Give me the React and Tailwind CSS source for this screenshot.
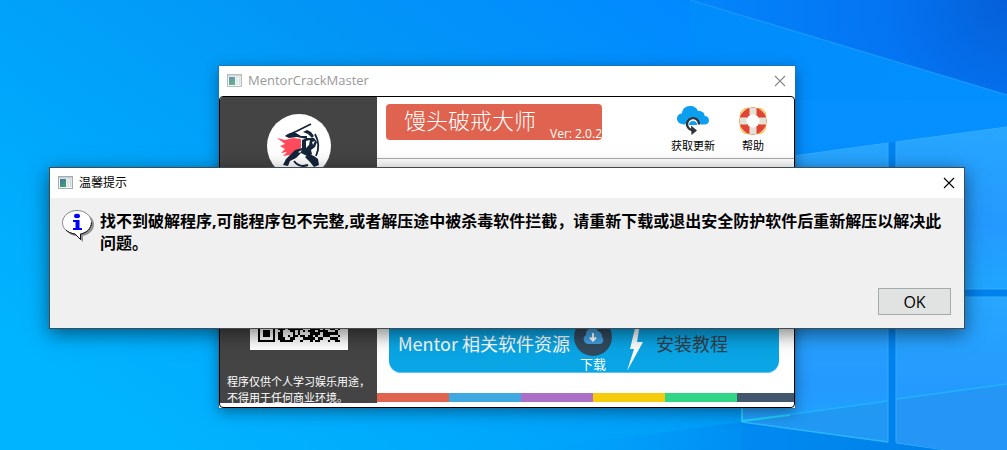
import React from "react";

function Wallpaper() {
  return (
    <svg
      className="absolute inset-0 h-full w-full"
      viewBox="0 0 1007 450"
      preserveAspectRatio="xMidYMid slice"
      aria-hidden="true"
    >
      <defs>
        <linearGradient id="sky" x1="0" y1="0.75" x2="1" y2="0.1">
          <stop offset="0" stopColor="#00b4ff" />
          <stop offset="0.3" stopColor="#00a4fa" />
          <stop offset="0.55" stopColor="#0295f6" />
          <stop offset="0.8" stopColor="#018aff" />
          <stop offset="1" stopColor="#0078f0" />
        </linearGradient>
        <radialGradient id="corner" gradientUnits="userSpaceOnUse" cx="1007" cy="0" r="300">
          <stop offset="0" stopColor="#0560d8" />
          <stop offset="0.4" stopColor="#0474f2" />
          <stop offset="1" stopColor="#0484fb" />
        </radialGradient>
        <linearGradient id="beam" x1="0" y1="0" x2="1" y2="0.6">
          <stop offset="0" stopColor="#018cfc" />
          <stop offset="1" stopColor="#0590ff" />
        </linearGradient>
        <linearGradient id="pane" x1="0" y1="0" x2="0" y2="1">
          <stop offset="0" stopColor="#27a6ff" />
          <stop offset="0.6" stopColor="#2499fe" />
          <stop offset="1" stopColor="#1fa6ff" />
        </linearGradient>
        <linearGradient id="floor" x1="0" y1="0" x2="1" y2="0">
          <stop offset="0" stopColor="#009dff" stopOpacity="0" />
          <stop offset="0.6" stopColor="#0089f0" />
          <stop offset="1" stopColor="#0080e8" />
        </linearGradient>
      </defs>
      <rect width="1007" height="450" fill="url(#sky)" />
      <path d="M690 0H1007V95Z" fill="url(#corner)" />
      <path d="M690 0L1007 95V300H700Z" fill="url(#beam)" />
      <path d="M690 0L1007 95" stroke="#1796ff" strokeWidth="1.5" />
      <path d="M742 130H1007V450H742Z" fill="#0082ee" />
      <path d="M742 100H1007V127L742 163Z" fill="#058fff" />
      <path d="M742 163L888 143V289H742Z" fill="url(#pane)" />
      <path d="M896 142L1007 127V289H896Z" fill="url(#pane)" />
      <path d="M742 297H888V442L742 422Z" fill="url(#pane)" />
      <path d="M896 297H1007V460L896 443Z" fill="url(#pane)" />
      <path d="M742 421L888 401V442L742 422Z" fill="#2098f4" />
      <path d="M896 399L1007 384V460L896 443Z" fill="#2596f5" />
      <path d="M742 421L888 401M896 399L1007 384" stroke="#20b4ff" strokeWidth="1.5" />
      <path
        d="M742 163L888 143V289M896 289V142L1007 127M896 289H1007M896 297H1007M888 297V442L742 422M896 297V443L1007 460"
        fill="none"
        stroke="#34acff"
        strokeWidth="1"
      />
      <path d="M530 450L742 422L942 450Z" fill="url(#floor)" />
      <path d="M742 422L888 442" stroke="#2cb4ff" strokeWidth="1.5" />
      <path d="M742 400V421L790 415" fill="none" stroke="#21d0ff" strokeWidth="2" />
    </svg>
  );
}

function AppIcon({ faded }) {
  return (
    <svg className={faded ? "h-4 w-4 opacity-80" : "h-4 w-4"} viewBox="0 0 16 16" aria-hidden="true">
      <defs>
        <linearGradient id="thumb" x1="0" y1="0" x2="0.6" y2="1">
          <stop offset="0" stopColor="#4472a8" />
          <stop offset="1" stopColor="#3fa06c" />
        </linearGradient>
      </defs>
      <rect x="0.5" y="1.5" width="14" height="12" fill="#f4f6f7" stroke="#a6acb0" />
      <rect x="1" y="2" width="13" height="1.500" fill="#c7ccd2" />
      <rect x="2" y="4" width="6" height="8" fill="url(#thumb)" />
      <rect x="8.500" y="4" width="3" height="8" fill="#dfe6ea" />
      <rect x="12" y="4" width="1.500" height="8" fill="#cfdcd6" />
    </svg>
  );
}

function CloseIcon() {
  return (
    <svg className="h-3 w-3" viewBox="0 0 12 12" fill="none" stroke="currentColor" aria-hidden="true">
      <path d="M1 1L11 11M11 1L1 11" strokeWidth="1.1" />
    </svg>
  );
}

function Warrior() {
  return (
    <svg className="h-16 w-16" viewBox="0 0 64 64" aria-hidden="true">
      <circle cx="32" cy="32" r="32" fill="#fff" />
      <path d="M19 22L30 17L44 10" fill="none" stroke="#14243a" strokeWidth="1.800" />
      <path d="M18 22L23 19L29 19L34 22L40 22V25L30 23L22 24ZM36 18L40 16L44 18L47 22L45 24L41 20Z" fill="#14243a" />
      <path d="M10 24L18 26L26 24L34 25V34L27 38L23 41L16 42L20 38L14 39L18 35L13 32L18 30Z" fill="#ff4b5c" />
      <path d="M35 26L40 24L47 24L50 28L48 33L44 36L45 40L42 43L34 39L29 44L23 47L21 52L16 51L19 45L24 40L28 36L35 34Z" fill="#14243a" />
      <path d="M39 27L43 26L42 31L39 34ZM45 28L48 27L46 31ZM31 38L35 36L33 39Z" fill="#fff" />
      <path d="M42 40L47 42L51 45L52 51L47 53L43 48L38 43Z" fill="#14243a" />
      <path d="M48 20Q54 31 49 42" fill="none" stroke="#14243a" strokeWidth="1.800" />
      <path d="M27 47Q32 54 41 51" fill="none" stroke="#14243a" strokeWidth="2" />
    </svg>
  );
}

const QR_SIZE = 33;
const FINDERS = [
  [0, 0],
  [QR_SIZE - 7, 0],
  [0, QR_SIZE - 7],
];

function qrModules() {
  const cells = [];
  let seed = 9173;
  for (let y = 0; y < QR_SIZE; y++) {
    for (let x = 0; x < QR_SIZE; x++) {
      seed = (seed * 1103515245 + 12345) % 2147483648;
      const reserved = FINDERS.some(([fx, fy]) => x >= fx - 1 && x <= fx + 7 && y >= fy - 1 && y <= fy + 7);
      if (!reserved && seed / 2147483648 > 0.44) cells.push(`M${x} ${y}h1v1h-1z`);
    }
  }
  return cells.join("");
}

function QrCode() {
  return (
    <svg className="h-[98px] w-[98px] bg-white" viewBox="-3 -3 39 39" shapeRendering="crispEdges" role="img" aria-label="QR">
      <path d={qrModules()} />
      {FINDERS.map(([x, y]) => (
        <g key={`${x}-${y}`}>
          <rect x={x} y={y} width="7" height="7" />
          <rect x={x + 1} y={y + 1} width="5" height="5" fill="#fff" />
          <rect x={x + 2} y={y + 2} width="3" height="3" />
        </g>
      ))}
    </svg>
  );
}

function UpdateIcon() {
  return (
    <svg className="h-8 w-8" viewBox="0 0 32 32" aria-hidden="true">
      <path
        d="M6 19C2 19 0 16.500 0 13.500C0 10.500 2.500 8.500 5 8.500C5 4 8.500 1 13 1C17 1 20 3 21 6C25 5.500 28 8 27.500 11C30.500 11 32 13 32 15.500C32 18 30 19.500 27.500 19.500H6Z"
        fill="#0c9ff0"
      />
      <path d="M8.500 20a7.500 7.500 0 0 1 15 0Z" fill="#fff" />
      <path d="M12 20a4 4 0 0 1 8 0Z" fill="#0c9ff0" />
      <path d="M22 19.500a6 6 0 1 0-7 5.500" fill="none" stroke="#2d3338" strokeWidth="2.400" />
      <path d="M14 20.500L20 25.500L14.500 30Z" fill="#2d3338" />
    </svg>
  );
}

function HelpIcon() {
  return (
    <svg className="h-8 w-8" viewBox="0 0 32 32" aria-hidden="true">
      <rect x="3.500" y="3.500" width="25" height="25" rx="7" fill="none" stroke="#f4c552" strokeWidth="1.500" />
      <circle cx="16" cy="16" r="10" fill="none" stroke="#df4436" strokeWidth="7" />
      <path d="M12.500 3H19.500V10H12.500ZM12.500 22H19.500V29H12.500ZM3 12.500H10V19.500H3ZM22 12.500H29V19.500H22Z" fill="#e6e2d3" />
      <circle cx="16" cy="16" r="6.500" fill="#fff" />
    </svg>
  );
}

function DownloadIcon() {
  return (
    <svg className="h-[38px] w-[38px]" viewBox="0 0 38 38" aria-hidden="true">
      <circle cx="19" cy="19" r="19" fill="#324a5e" />
      <path d="M13 26a5 5 0 0 1-1-9 6.500 6.500 0 0 1 12-4 6 6 0 0 1 4 6 4 4 0 0 1-2 7Z" fill="#3f9fdf" />
      <path d="M19 15V22M16 19.500L19 22.500L22 19.500" fill="none" stroke="#fff" strokeWidth="2" />
    </svg>
  );
}

function InfoBubble() {
  return (
    <svg className="h-8 w-8 shrink-0" viewBox="0 0 32 32" aria-hidden="true">
      <path d="M17 3C26 3 32 8 32 14C32 20 28 24 21 26V32L15 26C7 26 3 20 3 14Z" fill="#919191" />
      <path d="M15 .500C23 .500 29.500 6 29.500 12.500C29.500 18 25 23 18.500 24V29.500L13 24C5 23 .500 18.500 .500 12.500C.500 6 7 .500 15 .500Z" fill="#fff" stroke="#868686" />
      <path d="M29.500 12.500C29.500 18 25 23 18.500 24V29.500L13 24C9 23.500 6 22 4 20" fill="none" stroke="#111" />
      <ellipse cx="15" cy="6" rx="3" ry="2.200" fill="#00f" />
      <path d="M11 10H17.500V18H20V20H11V18H13.500V12H11Z" fill="#00f" />
    </svg>
  );
}

const STRIPES = ["bg-[#df634e]", "bg-[#3fa8e0]", "bg-[#ab70c6]", "bg-[#f4cc0b]", "bg-[#30d585]"];

function CrackMasterWindow() {
  return (
    <section className="absolute left-[219px] top-[66px] flex h-[342px] w-[576px] flex-col bg-white shadow-[0_4px_14px_rgba(0,0,0,0.4)] outline outline-[#2a6ea0]/50">
      <header className="flex h-[30px] shrink-0 items-center gap-1 pl-2 pr-[9px] text-[13px] text-[#999]">
        <AppIcon faded />
        <h1 className="ml-px flex-1">MentorCrackMaster</h1>
        <button type="button" aria-label="Close" className="text-[#888]">
          <CloseIcon />
        </button>
      </header>
      <div className="flex min-h-0 flex-1 overflow-hidden rounded border border-black pb-1">
        <aside className="flex w-[157px] shrink-0 flex-col items-center overflow-hidden bg-[#444] pt-[17px] text-[11px] leading-4 text-white">
          <Warrior />
          <div className="mt-auto">
            <QrCode />
          </div>
          <p className="-mb-1 mt-6 w-full shrink-0 whitespace-nowrap pl-[7px] pb-px">
            程序仅供个人学习娱乐用途，
            <br />
            不得用于任何商业环境。
          </p>
        </aside>
        <main className="flex min-w-0 flex-1 flex-col">
          <div className="flex h-[62px] shrink-0 items-start border-b border-[#aaa] pl-[9px] pr-[25px]">
            <div className="mt-[7px] flex h-9 w-[216px] items-center justify-between overflow-hidden rounded bg-[#df634e] pl-[18px] text-white">
              <h2 className="whitespace-nowrap pb-1 text-[22px] font-light">馒头破戒大师</h2>
              <span className="self-end whitespace-nowrap text-xs leading-3">Ver: 2.0.2</span>
            </div>
            <nav className="ml-auto flex gap-[22px] pt-2 text-[11px] leading-4">
              <button type="button" className="flex flex-col items-center gap-[1px]">
                <UpdateIcon />
                获取更新
              </button>
              <button type="button" className="flex flex-col items-center gap-[1px]">
                <HelpIcon />
                帮助
              </button>
            </nav>
          </div>
          <div className="ml-3 mr-[15px] mt-auto flex h-[60px] items-end rounded-b-xl border-b border-[#5cc3f2] bg-[#0aa5e5] pl-[9px] font-['Noto_Sans_CJK_SC',sans-serif] text-lg text-white">
            <a href="#resources" className="flex items-end gap-1">
              <span className="mb-[15px] whitespace-nowrap">Mentor 相关软件资源</span>
              <span className="flex flex-col items-center text-[13px] leading-4">
                <DownloadIcon />
                下载
              </span>
            </a>
            <svg className="mx-3 h-12 w-5" viewBox="0 0 20 48" aria-hidden="true">
              <path d="M12 0L6 25H10L3 47L19 18H13L16 0Z" fill="#fff" />
            </svg>
            <a href="#tutorial" className="mb-[15px] whitespace-nowrap text-[#32404a]">
              安装教程
            </a>
          </div>
          <div className="mb-px mt-5 flex h-[9px] shrink-0">
            {STRIPES.map((color) => (
              <span key={color} className={`w-[72px] shrink-0 ${color}`} />
            ))}
            <span className="flex-1 bg-[#42566d]" />
          </div>
        </main>
      </div>
    </section>
  );
}

function NoticeDialog() {
  return (
    <section
      role="dialog"
      aria-labelledby="notice-title"
      className="absolute left-[49px] top-[167px] w-[916px] border border-[#3d4c55] bg-[#f0f0f0] text-black shadow-[0_5px_18px_rgba(0,0,0,0.5)]"
    >
      <header className="flex h-[30px] items-center gap-1 bg-white pl-2 pr-[9px] text-xs">
        <AppIcon />
        <h2 id="notice-title" className="ml-px flex-1">
          温馨提示
        </h2>
        <button type="button" aria-label="Close">
          <CloseIcon />
        </button>
      </header>
      <div className="flex gap-[6px] pl-3 pr-[18px] pt-3">
        <InfoBubble />
        <p className="text-base font-bold leading-[22px]">
          找不到破解程序,可能程序包不完整,或者解压途中被杀毒软件拦截，请重新下载或退出安全防护软件后重新解压以解决此问题。
        </p>
      </div>
      <div className="flex justify-end pb-[13px] pr-[13px] pt-[34px]">
        <button type="button" className="h-[27px] w-[73px] border border-[#a5aaaa] bg-[#e1e3e2] text-base leading-6">
          OK
        </button>
      </div>
    </section>
  );
}

export default function App() {
  return (
    <div className="relative min-h-screen overflow-hidden bg-[#009af8] font-['Open_Sans','Noto_Sans_CJK_SC',sans-serif]">
      <Wallpaper />
      <CrackMasterWindow />
      <NoticeDialog />
    </div>
  );
}
